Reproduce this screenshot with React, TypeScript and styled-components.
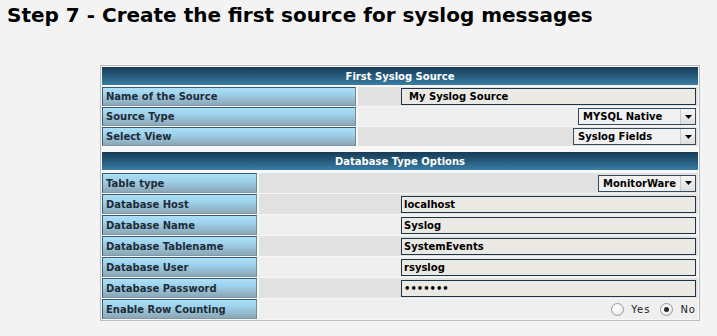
import React from "react";
import styled, { createGlobalStyle } from "styled-components";

const Global = createGlobalStyle`
  html, body { margin: 0; padding: 0; background: #f3f3f3; }
  body { font-family: "DejaVu Sans", Verdana, sans-serif; }
`;

const Page = styled.div`
  width: 717px;
  height: 336px;
  overflow: hidden;
  background: #f3f3f3;
  display: flex;
  flex-direction: column;
`;

const Title = styled.h1`
  margin: 3px 0 0 7px;
  font-size: 20px;
  line-height: 24px;
  font-weight: bold;
  color: #000;
`;

const Frame = styled.div`
  box-sizing: border-box;
  margin: 38px 0 0 100px;
  width: 600px;
  border: 1px solid #bdbdbd;
  padding: 1px;
  background: #f7f7f7;
  display: flex;
  flex-direction: column;
  gap: 6px;
`;

const Section = styled.div<{ $label: number; $row: number }>`
  display: grid;
  grid-template-columns: ${(p) => p.$label}px 1fr;
  grid-auto-rows: ${(p) => p.$row}px;
  column-gap: 2px;
  row-gap: 1px;
`;

const Header = styled.div<{ $after: number }>`
  grid-column: 1 / -1;
  height: 18px;
  margin-bottom: ${(p) => p.$after}px;
  display: flex;
  align-items: center;
  justify-content: center;
  background: linear-gradient(to bottom, #163b57 0%, #245777 45%, #3a7ea6 100%);
  color: #fff;
  font-size: 10px;
  font-weight: bold;
`;

const Label = styled.div`
  box-sizing: border-box;
  display: flex;
  align-items: center;
  padding-left: 3px;
  background: linear-gradient(to bottom, #ace0f8 0%, #9dd0ea 40%, #8ca6b4 100%);
  border-top: 1px solid #3b5a70;
  border-left: 1px solid #3b5a70;
  border-right: 1px solid #6e8a9b;
  border-bottom: 1px solid #7f98a7;
  font-size: 10px;
  font-weight: bold;
  color: #1e2c37;
  white-space: nowrap;
`;

const Value = styled.div<{ $tone: "dark" | "light" }>`
  display: flex;
  align-items: center;
  justify-content: flex-end;
  padding-right: 2px;
  background: ${(p) => (p.$tone === "dark" ? "#e1e1e1" : "#efefef")};
`;

const TextInput = styled.input<{ $pad: number }>`
  box-sizing: border-box;
  width: 295px;
  height: 17px;
  margin: 0;
  border: 1px solid #1c3348;
  background: #ebe9e3;
  padding: 0 0 0 ${(p) => p.$pad}px;
  font-family: "DejaVu Sans", Verdana, sans-serif;
  font-size: 10px;
  font-weight: bold;
  color: #000;
  outline: none;
`;

const SelectBox = styled.div<{ $w: number }>`
  box-sizing: border-box;
  width: ${(p) => p.$w}px;
  height: 17px;
  display: flex;
  border: 1px solid #34495c;
  background: #f1f1f1;
`;

const SelectText = styled.span`
  flex: 1;
  display: flex;
  align-items: center;
  padding-left: 4px;
  font-size: 10px;
  font-weight: bold;
  color: #000;
  white-space: nowrap;
`;

const SelectButton = styled.span`
  box-sizing: border-box;
  width: 15px;
  display: flex;
  align-items: center;
  justify-content: center;
  background: linear-gradient(to bottom, #f6f6f6, #dedede);
  border-left: 1px solid #c9c9c9;
`;

const RadioGroup = styled.div`
  display: flex;
  align-items: center;
`;

const RadioCircle = styled.span<{ $checked: boolean }>`
  box-sizing: border-box;
  width: 13px;
  height: 13px;
  border-radius: 50%;
  border: 1px solid #9c9c9c;
  background: radial-gradient(circle at 40% 35%, #ffffff 0%, #f2f2f2 55%, #d6d6d6 100%);
  display: flex;
  align-items: center;
  justify-content: center;
  &::after {
    content: "";
    width: 5px;
    height: 5px;
    border-radius: 50%;
    background: #2a2a2a;
    display: ${(p) => (p.$checked ? "block" : "none")};
  }
`;

const RadioText = styled.span<{ $gap: number }>`
  margin: 0 ${(p) => p.$gap}px 0 7px;
  font-size: 10px;
  letter-spacing: 1px;
  color: #222;
`;

const Arrow = () => (
  <svg width="7" height="4" viewBox="0 0 7 4">
    <path d="M0 0 H7 L3.5 4 Z" fill="#000" />
  </svg>
);

const Select = ({ w, text }: { w: number; text: string }) => (
  <SelectBox $w={w}>
    <SelectText>{text}</SelectText>
    <SelectButton>
      <Arrow />
    </SelectButton>
  </SelectBox>
);

const dbRows: { label: string; value: string; tone: "dark" | "light"; type?: string }[] = [
  { label: "Database Host", value: "localhost", tone: "dark" },
  { label: "Database Name", value: "Syslog", tone: "light" },
  { label: "Database Tablename", value: "SystemEvents", tone: "dark" },
  { label: "Database User", value: "rsyslog", tone: "light" },
  { label: "Database Password", value: "1234567", tone: "dark", type: "password" },
];

export default function App() {
  return (
    <Page>
      <Global />
      <Title>Step 7 - Create the first source for syslog messages</Title>
      <Frame>
        <Section $label={254} $row={19}>
          <Header $after={1}>First Syslog Source</Header>
          <Label>Name of the Source</Label>
          <Value $tone="dark">
            <TextInput $pad={7} defaultValue="My Syslog Source" />
          </Value>
          <Label>Source Type</Label>
          <Value $tone="light">
            <Select w={118} text="MYSQL Native" />
          </Value>
          <Label>Select View</Label>
          <Value $tone="dark">
            <Select w={123} text="Syslog Fields" />
          </Value>
        </Section>
        <Section $label={155} $row={20}>
          <Header $after={4}>Database Type Options</Header>
          <Label>Table type</Label>
          <Value $tone="dark">
            <Select w={98} text="MonitorWare" />
          </Value>
          {dbRows.map((r) => (
            <React.Fragment key={r.label}>
              <Label>{r.label}</Label>
              <Value $tone={r.tone}>
                <TextInput $pad={2} type={r.type ?? "text"} defaultValue={r.value} />
              </Value>
            </React.Fragment>
          ))}
          <Label>Enable Row Counting</Label>
          <Value $tone="light">
            <RadioGroup>
              <RadioCircle $checked={false} />
              <RadioText $gap={10}>Yes</RadioText>
              <RadioCircle $checked={true} />
              <RadioText $gap={0}>No</RadioText>
            </RadioGroup>
          </Value>
        </Section>
      </Frame>
    </Page>
  );
}
